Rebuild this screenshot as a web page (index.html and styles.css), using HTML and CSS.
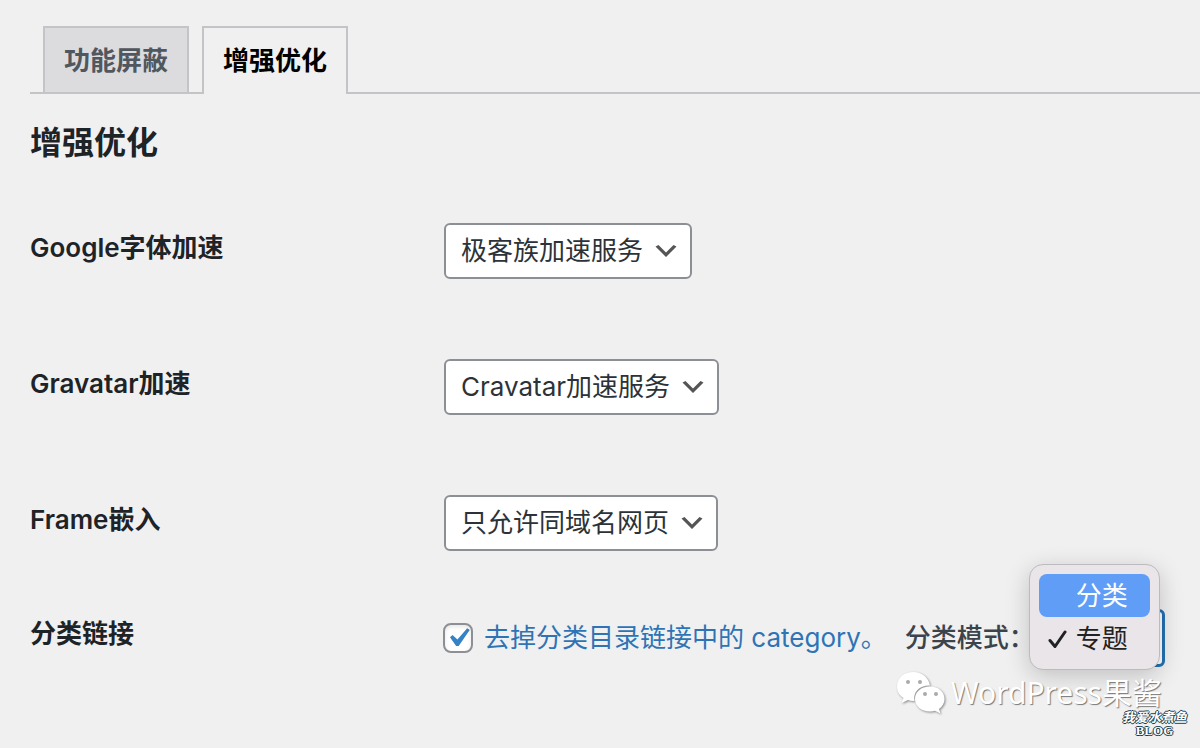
FILE: index.html
```html
<!DOCTYPE html>
<html lang="zh-CN">
<head>
  <meta charset="UTF-8" />
  <meta name="viewport" content="width=device-width, initial-scale=1.0"/>
  <title>增强优化</title>
  <link rel="stylesheet" href="styles.css">
</head>
<body>

  <!-- Tabs -->
  <nav class="tabs">
    <a class="tab" href="#block">功能屏蔽</a>
    <a class="tab tab-active" href="#enhance">增强优化</a>
  </nav>

  <main id="enhance">
    <h2>增强优化</h2>

    <form class="settings">
      <div class="row">
        <label class="row-title" for="google-fonts">Google字体加速</label>
        <select id="google-fonts">
          <option>极客族加速服务</option>
        </select>
      </div>

      <div class="row">
        <label class="row-title" for="gravatar">Gravatar加速</label>
        <select id="gravatar">
          <option>Cravatar加速服务</option>
        </select>
      </div>

      <div class="row">
        <label class="row-title" for="frame">Frame嵌入</label>
        <select id="frame">
          <option>只允许同域名网页</option>
        </select>
      </div>

      <div class="row row-links">
        <span class="row-title">分类链接</span>
        <div class="field">
          <input type="checkbox" id="no-category" checked>
          <label class="check-label" for="no-category">去掉分类目录链接中的 category。</label>
          <label class="mode-label" for="mode">分类模式：</label>
          <div class="mode">
            <select id="mode" class="focused">
              <option>分类</option>
              <option selected>专题</option>
            </select>
            <!-- Open menu -->
            <ul class="menu" role="listbox" aria-label="分类模式">
              <li class="menu-item menu-item-active" role="option" aria-selected="false">分类</li>
              <li class="menu-item" role="option" aria-selected="true">
                <svg class="menu-check" viewBox="0 0 20 20" aria-hidden="true"><path d="M2 11.500L7 17.500L17 3"/></svg>专题
              </li>
            </ul>
          </div>
        </div>
      </div>
    </form>
  </main>

  <!-- Watermarks -->
  <div class="wechat">
    <svg class="wechat-logo" viewBox="0 0 50 43" aria-hidden="true">
      <path d="M17.500 1C8 1 1 7 1 15.500c0 5 2.500 9 6.500 11.500L5.500 32l6.500-3c2 .6 4 1 6.500.900C16.500 21 24 14 34 14.500 32.500 6.500 26 1 17.500 1z"/>
      <path d="M34 15.500c-8.500 0-15 5.500-15 12.500s6.500 12.500 15 12.500c1.800 0 3.500-.3 5-.8l5.500 2.800-1.500-4.500c3.500-2.500 5.500-6 5.500-10 0-7-6-12.500-14.500-12.500z"/>
      <g class="wechat-eyes">
        <circle cx="12" cy="11" r="2"/><circle cx="24" cy="11" r="2"/>
        <circle cx="29" cy="23" r="2"/><circle cx="40" cy="23" r="2"/>
      </g>
    </svg>
    <span>WordPress果酱</span>
  </div>
  <div class="blog-mark">
    <span class="blog-name">我爱水煮鱼</span>
    <span>BLOG</span>
  </div>

</body>
</html>
```
FILE: styles.css
```css
* {
  box-sizing: border-box;
}

body {
  position: relative;
  min-height: 100vh;
  margin: 0;
  padding: 26px 0 0 30px;
  background: #f0f0f0;
  color: #1d2327;
  font-family: Inter, "Noto Sans CJK SC", sans-serif;
  font-size: 26px;
  line-height: 36px;
  overflow-x: hidden;
}

/* Tabs */
.tabs {
  display: flex;
  gap: 13px;
  padding-left: 13px;
  border-bottom: 2px solid #c3c4c7;
}

.tab {
  padding: 15px 19px 13px;
  border: 2px solid #c3c4c7;
  border-bottom: none;
  background: #dcdcde;
  color: #50575e;
  font-weight: 600;
  text-decoration: none;
}

.tab-active {
  margin-bottom: -2px;
  background: #f0f0f0;
  color: #000;
}

h2 {
  margin: 26px 0 58px;
  font-size: 32px;
  line-height: 45px;
  font-weight: 600;
}

/* Settings rows */
.row {
  display: grid;
  grid-template-columns: 414px 1fr;
  justify-items: start;
  align-items: start;
  margin-bottom: 80px;
}

.row-links {
  margin-top: -22px;
  margin-bottom: 0;
}

.row-title {
  padding-top: 7px;
  font-weight: 600;
}

select {
  height: 56px;
  padding: 0 46px 0 15px;
  border: 2px solid #8c8f94;
  border-radius: 6px;
  background: #fff url('data:image/svg+xml,<svg xmlns="http://www.w3.org/2000/svg" viewBox="0 0 20 20"><path d="M5 6l5 5 5-5 2 1-7 7-7-7 2-1z" fill="%23555"/></svg>') no-repeat right 9px center / 30px;
  color: #2c3338;
  font: inherit;
  appearance: none;
}

.focused {
  display: block;
  width: 130px;
  height: 58px;
  border: 3px solid #2271b1;
  outline: none;
}

.field {
  display: flex;
  align-items: center;
  white-space: nowrap;
}

input[type="checkbox"] {
  width: 30px;
  height: 30px;
  margin: 0 11px 0 -1px;
  border: 2px solid #8c8f94;
  border-radius: 8px;
  background: #fff;
  box-shadow: inset 0 2px 4px rgba(0, 0, 0, 0.1);
  appearance: none;
}

input[type="checkbox"]:checked {
  background: #fff url('data:image/svg+xml,<svg xmlns="http://www.w3.org/2000/svg" viewBox="0 0 20 20"><path d="M14.830 4.890l1.340.940-5.810 8.380H9.020L5.780 9.670l1.340-1.250 2.570 2.400z" fill="%233582c4"/></svg>') no-repeat center / 38px;
}

.check-label {
  color: #2e74b5;
}

.mode-label {
  margin-left: 18px;
  color: #3c434a;
  font-weight: 500;
}

.mode {
  position: relative;
}

/* Menu over the select */
.menu {
  position: absolute;
  top: -45px;
  left: -6px;
  width: 131px;
  margin: 0;
  padding: 9px;
  border: 1px solid #bdbbbd;
  border-radius: 14px;
  background: #e9e5e8;
  box-shadow: 0 6px 24px rgba(0, 0, 0, 0.2);
  list-style: none;
}

.menu-item {
  display: flex;
  align-items: center;
  justify-content: flex-end;
  gap: 8px;
  height: 43px;
  padding-right: 22px;
  border-radius: 8px;
  color: #222;
}

.menu-item-active {
  background: #5f9df7;
  color: #fff;
}

.menu-check {
  width: 20px;
  height: 20px;
  fill: none;
  stroke: #222;
  stroke-width: 3;
  stroke-linecap: round;
  stroke-linejoin: round;
}

/* Watermarks */
.wechat {
  position: absolute;
  right: 38px;
  bottom: 34px;
  display: flex;
  align-items: center;
  gap: 5px;
  color: #fff;
  font-family: "Noto Sans", "Noto Sans CJK SC", sans-serif;
  font-size: 30px;
  line-height: 28px;
  text-shadow: 1px 1px 1px #777;
}

.wechat-logo {
  width: 50px;
  height: 43px;
  fill: #fff;
  filter: drop-shadow(1px 1px 1px #888);
}

.wechat-eyes {
  fill: #aaa;
}

.blog-mark {
  position: absolute;
  right: 13px;
  bottom: 11px;
  display: flex;
  flex-direction: column;
  align-items: center;
  color: #fff;
  font-family: "Liberation Serif", "Noto Sans CJK SC", serif;
  font-size: 13px;
  font-weight: bold;
  line-height: 13px;
  text-shadow: 1px 0 #123c4c, -1px 0 #123c4c, 0 1px #123c4c, 0 -1px #123c4c;
}

.blog-name {
  font-style: italic;
}
```
